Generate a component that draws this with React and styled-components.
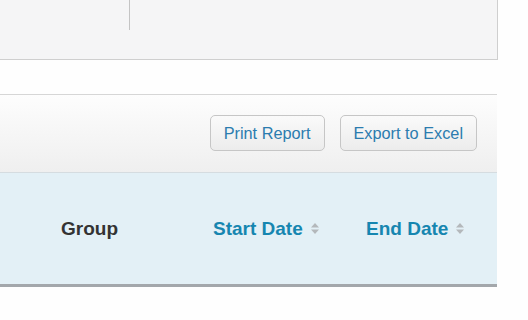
import React from "react";
import styled, { createGlobalStyle } from "styled-components";

const GlobalStyle = createGlobalStyle`
  html, body {
    margin: 0;
    padding: 0;
    background: #fefefe;
    font-family: "Liberation Sans", Arial, sans-serif;
  }
`;

const Page = styled.div`
  width: 528px;
  height: 320px;
  overflow: hidden;
`;

const FilterPanel = styled.div`
  width: 498px;
  height: 60px;
  box-sizing: border-box;
  background: #f5f5f6;
  border-right: 1px solid #cfcfcf;
  border-bottom: 1px solid #cfcfcf;
  display: flex;
`;

const FilterColumn = styled.div`
  width: 129px;
  height: 30px;
  border-right: 1px solid #c4c4c4;
`;

const Report = styled.div`
  width: 497px;
  margin-top: 34px;
  border-top: 1px solid #d6d6d6;
`;

const Toolbar = styled.div`
  height: 78px;
  box-sizing: border-box;
  display: flex;
  justify-content: flex-end;
  align-items: center;
  gap: 15px;
  padding: 0 20px 1px 0;
  background: linear-gradient(#fdfdfd, #efefef);
  border-bottom: 1px solid #d5dce0;
`;

const Button = styled.button`
  height: 36px;
  padding: 0 13px;
  border: 1px solid #c6c6c6;
  border-radius: 5px;
  background: linear-gradient(#fafafa, #ececec);
  color: #2b7caf;
  font-family: "Liberation Sans", Arial, sans-serif;
  font-size: 16.3px;
  cursor: pointer;
`;

const HeaderRow = styled.div`
  height: 114px;
  box-sizing: border-box;
  display: grid;
  grid-template-columns: 152px 153px 153px;
  align-items: center;
  padding-left: 61px;
  background: #e3f0f6;
  border-bottom: 3px solid #a3a7ab;
`;

const HeaderCell = styled.div`
  display: flex;
  align-items: center;
  gap: 7px;
  font-size: 19px;
  font-weight: bold;
  color: ${(p) => (p.$sortable ? "#1686b0" : "#333333")};
`;

const SortIcon = () => (
  <svg width="10" height="13" viewBox="0 0 10 13">
    <path d="M5 1 L9 5.5 H1 Z" fill="#b4b8bb" />
    <path d="M5 12 L9 7.5 H1 Z" fill="#b4b8bb" />
  </svg>
);

export default function App() {
  return (
    <Page>
      <GlobalStyle />
      <FilterPanel>
        <FilterColumn />
      </FilterPanel>
      <Report>
        <Toolbar>
          <Button>Print Report</Button>
          <Button>Export to Excel</Button>
        </Toolbar>
        <HeaderRow>
          <HeaderCell>Group</HeaderCell>
          <HeaderCell $sortable>
            Start Date <SortIcon />
          </HeaderCell>
          <HeaderCell $sortable>
            End Date <SortIcon />
          </HeaderCell>
        </HeaderRow>
      </Report>
    </Page>
  );
}
